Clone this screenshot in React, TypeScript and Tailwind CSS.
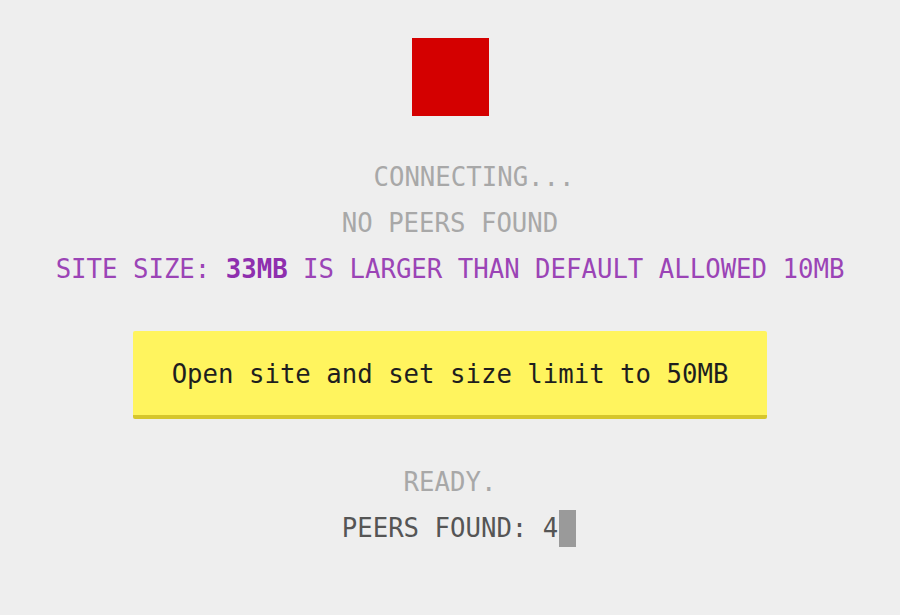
export default function App() {
  return (
    <div className="h-[615px] w-[900px] bg-[#eeeeee] flex flex-col items-center font-['DejaVu_Sans_Mono',monospace] text-[25.7px] leading-[46px]">
      <div className="mt-[38px] h-[78px] w-[77px] bg-[#d40000]" />

      <div className="mt-[38px] pl-[48px] text-[#a8a8a8]">CONNECTING...</div>
      <div className="text-[#a8a8a8]">NO PEERS FOUND</div>
      <div className="text-[#9b44b6]">
        SITE SIZE: <b className="text-[#8e2fae]">33MB</b> IS LARGER THAN DEFAULT ALLOWED 10MB
      </div>

      <button className="mt-[39px] h-[88px] w-[634px] rounded-[2px] bg-[#fff45e] border-b-4 border-[#d6c62c] text-[#1e1e1e] pt-[2px]">
        Open site and set size limit to 50MB
      </button>

      <div className="mt-[40px] text-[#a8a8a8]">READY.</div>
      <div className="flex items-center pl-[18px] text-[#555555]">
        PEERS FOUND: 4
        <span className="ml-[1px] inline-block h-[37px] w-[17px] bg-[#9a9a9a]" />
      </div>
    </div>
  );
}
